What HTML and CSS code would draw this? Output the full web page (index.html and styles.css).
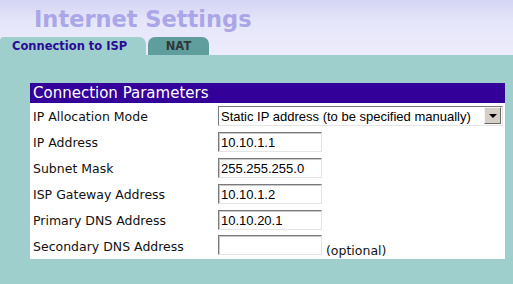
FILE: index.html
```html
<!DOCTYPE html>
<html lang="en">
<head>
    <meta charset="UTF-8">
    <title>Internet Settings</title>
    <link rel="stylesheet" href="styles.css">
</head>
<body>
    <div class="top">
        <h1 class="title">Internet Settings</h1>
        <div class="tabs">
            <div class="tab active">Connection to ISP</div>
            <div class="tab">NAT</div>
        </div>
    </div>
    <div class="panel">
        <table class="params">
            <tr>
                <th colspan="2">Connection Parameters</th>
            </tr>
            <tr>
                <td class="label">IP Allocation Mode</td>
                <td>
                    <div class="select">
                        <select>
                            <option>Static IP address (to be specified manually)</option>
                            <option>Dynamic IP address (DHCP)</option>
                        </select>
                        <span class="drop"><span class="arrow"></span></span>
                    </div>
                </td>
            </tr>
            <tr>
                <td class="label">IP Address</td>
                <td><input type="text" value="10.10.1.1"></td>
            </tr>
            <tr>
                <td class="label">Subnet Mask</td>
                <td><input type="text" value="255.255.255.0"></td>
            </tr>
            <tr>
                <td class="label">ISP Gateway Address</td>
                <td><input type="text" value="10.10.1.2"></td>
            </tr>
            <tr>
                <td class="label">Primary DNS Address</td>
                <td><input type="text" value="10.10.20.1"></td>
            </tr>
            <tr>
                <td class="label">Secondary DNS Address</td>
                <td><input type="text" value=""> <span class="optional">(optional)</span></td>
            </tr>
        </table>
    </div>
</body>
</html>
```

FILE: styles.css
```css
body {
    margin: 0;
    height: 284px;
    background-color: #9fcfcc;
    font-family: 'DejaVu Sans', Verdana, sans-serif;
}

.top {
    height: 55px;
    display: flex;
    flex-direction: column;
    justify-content: space-between;
    background: linear-gradient(#d4d4f5, #e6e6fa 40%, #ececfc);
}

.title {
    margin: 0;
    padding: 6px 0 0 34px;
    font-size: 22.5px;
    line-height: 26px;
    font-weight: bold;
    color: #aba6e8;
}

.tabs {
    display: flex;
    gap: 2px;
    height: 18px;
}

.tab {
    height: 18px;
    line-height: 18px;
    font-size: 11.5px;
    font-weight: bold;
    text-align: center;
    width: 61px;
    background-color: #5f9e9c;
    color: #2e3838;
    border-radius: 7px 7px 0 0;
}

.tab.active {
    width: 146px;
    text-align: left;
    box-sizing: border-box;
    padding-left: 12px;
    background-color: #9fcfcc;
    color: #2a0a96;
    border-radius: 4px 7px 0 0;
}

.panel {
    padding: 28px 0 0 30px;
}

.params {
    width: 475px;
    border-collapse: collapse;
    background-color: #ffffff;
    font-size: 12.5px;
}

.params th {
    height: 20px;
    padding: 0 0 0 3px;
    background-color: #330099;
    color: #ffffff;
    font-size: 15px;
    font-weight: normal;
    text-align: left;
}

.params td {
    height: 26px;
    padding: 0;
    vertical-align: middle;
}

.params td.label {
    width: 185px;
    padding-left: 3px;
    color: #111111;
}

input {
    box-sizing: border-box;
    width: 104px;
    height: 20px;
    margin: 0;
    padding: 0 2px;
    font-family: 'Liberation Sans', Arial, sans-serif;
    font-size: 13px;
    color: #000000;
    border: 1px solid;
    border-color: #7a7a7a #e4e4e4 #e4e4e4 #7a7a7a;
    box-shadow: inset 1px 1px 0 #c8c8c8;
    outline: none;
}

.select {
    display: flex;
    box-sizing: border-box;
    width: 285px;
    height: 20px;
    border: 1px solid;
    border-color: #7a7a7a #e4e4e4 #e4e4e4 #7a7a7a;
    background-color: #ffffff;
}

.select select {
    flex: 1;
    appearance: none;
    border: none;
    background: none;
    padding: 0 2px;
    margin: 0;
    font-family: 'Liberation Sans', Arial, sans-serif;
    font-size: 13px;
    color: #000000;
    outline: none;
}

.drop {
    display: flex;
    align-items: center;
    justify-content: center;
    box-sizing: border-box;
    width: 17px;
    margin: 0 1px 1px 0;
    background-color: #d4d0c8;
    border: 1px solid;
    border-color: #f4f4f4 #6a6a6a #6a6a6a #f4f4f4;
}

.arrow {
    width: 0;
    height: 0;
    border-left: 4px solid transparent;
    border-right: 4px solid transparent;
    border-top: 4px solid #000000;
}

.optional {
    vertical-align: -5px;
    color: #111111;
}
```
